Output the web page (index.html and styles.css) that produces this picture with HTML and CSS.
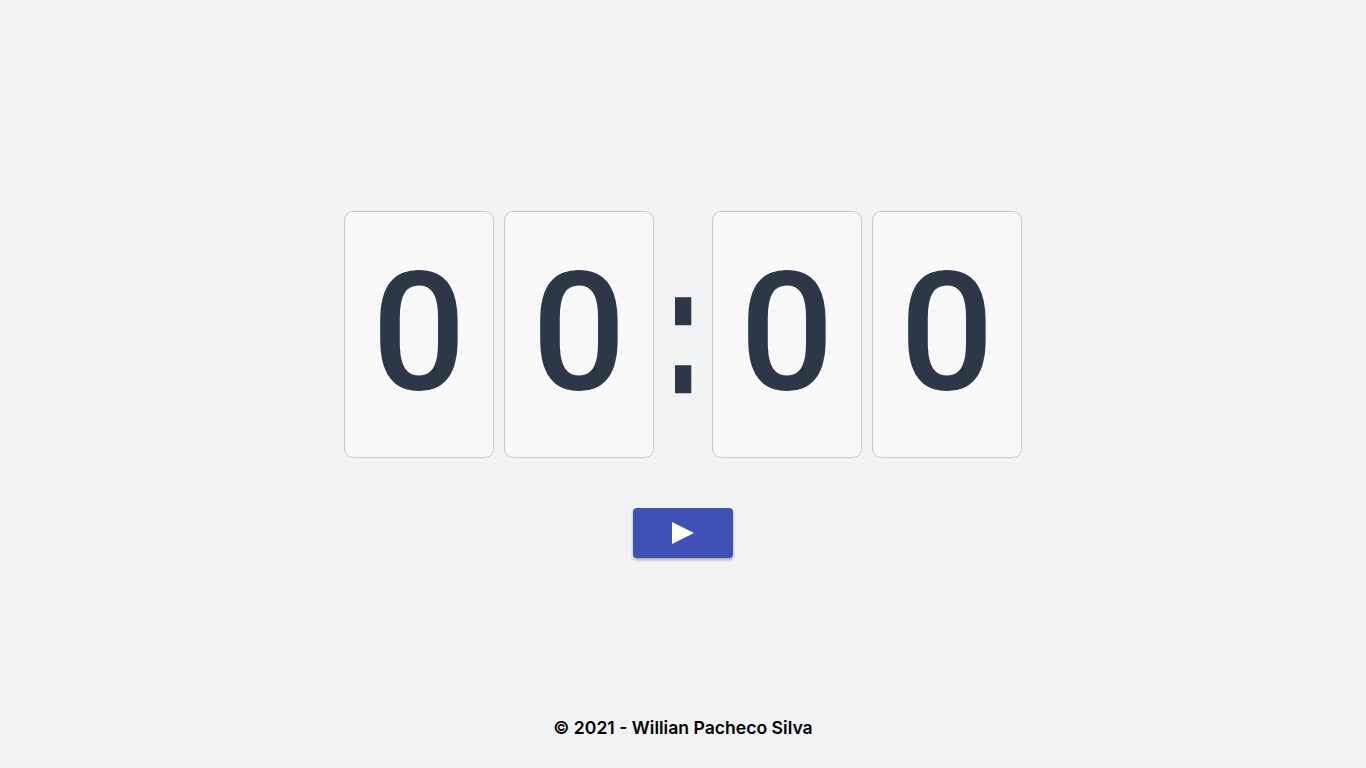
FILE: index.html
```html
<!DOCTYPE html>
<html lang="pt-BR">
<head>
<meta charset="utf-8">
<title>Timer</title>
<link rel="stylesheet" href="styles.css">
</head>
<body>
<div class="page">
  <main class="main">
    <div class="clock">
      <div class="card"><span class="digit">0</span></div>
      <div class="card"><span class="digit">0</span></div>
      <div class="colon"><span class="colon-text">:</span></div>
      <div class="card"><span class="digit">0</span></div>
      <div class="card"><span class="digit">0</span></div>
    </div>
    <button class="play" type="button" aria-label="Iniciar">
      <svg width="24" height="24" viewBox="0 0 24 24"><polygon points="1,1 23,12 1,23" fill="#ffffff"/></svg>
    </button>
  </main>
  <footer class="footer">© 2021 - Willian Pacheco Silva</footer>
</div>
</body>
</html>
```
FILE: styles.css
```css
* { box-sizing: border-box; }
html, body { margin: 0; padding: 0; }
body {
  background: #f2f3f5;
  font-family: Inter, "Noto Sans", sans-serif;
}
.page {
  height: 100vh;
  display: grid;
  grid-template-rows: 1fr auto 1fr;
}
.main {
  grid-row: 2;
  display: flex;
  flex-direction: column;
  align-items: center;
  gap: 50px;
  padding-top: 1px;
}
.clock {
  display: flex;
  gap: 10px;
}
.card {
  width: 150px;
  height: 247px;
  background: #f9f9f9;
  border: 1px solid #c9c9c9;
  border-radius: 9px;
  display: flex;
  align-items: center;
  justify-content: center;
  padding-bottom: 4px;
}
.digit {
  font-family: Roboto, sans-serif;
  font-weight: 500;
  font-size: 166px;
  line-height: 1;
  color: #2d3748;
}
.colon {
  width: 38px;
  display: flex;
  align-items: center;
  justify-content: center;
  padding-bottom: 8px;
}
.colon-text {
  display: inline-block;
  font-family: "DejaVu Sans", sans-serif;
  font-weight: normal;
  font-size: 115px;
  line-height: 1;
  color: #2d3748;
  -webkit-text-stroke: 4.4px #2d3748;
  transform: scaleY(1.5);
}
.play {
  width: 100px;
  height: 50px;
  border: none;
  border-radius: 4px;
  background: #3f51b5;
  box-shadow: 0 2px 3px rgba(0,0,0,0.3);
  display: flex;
  align-items: center;
  justify-content: center;
  padding: 0;
  cursor: pointer;
}
.footer {
  grid-row: 3;
  align-self: end;
  text-align: center;
  font-weight: 600;
  font-size: 17.6px;
  line-height: 27px;
  color: #000;
  padding-bottom: 27px;
}
```
